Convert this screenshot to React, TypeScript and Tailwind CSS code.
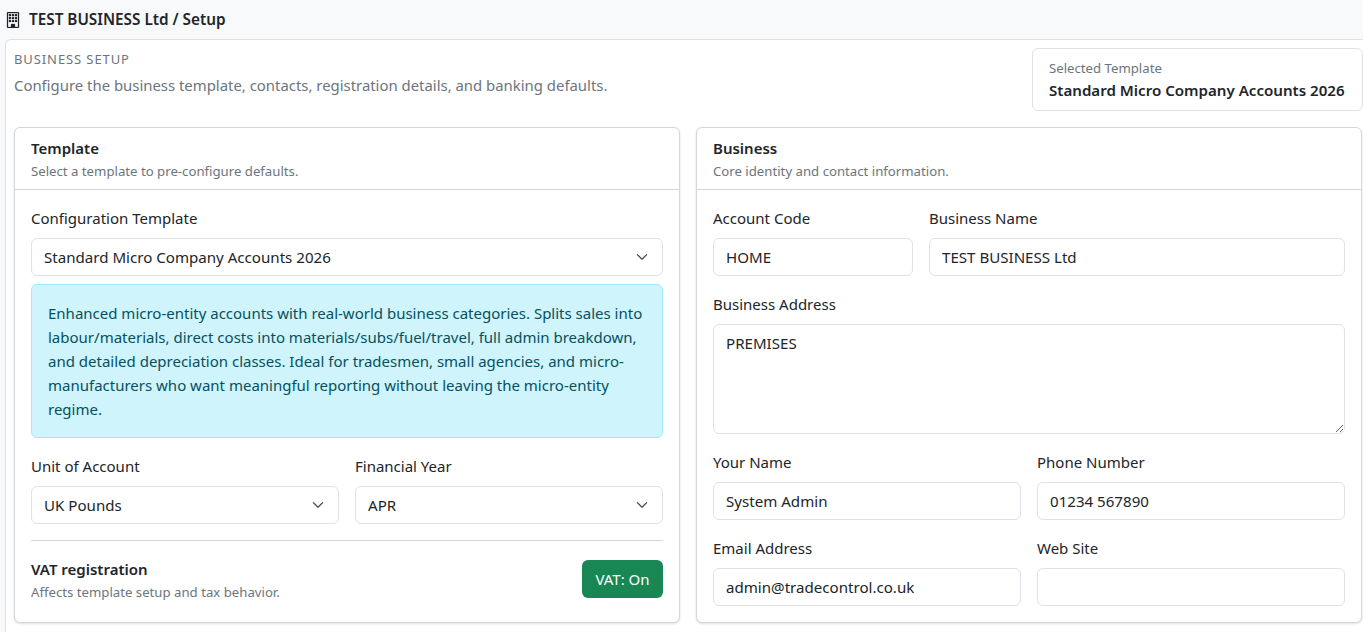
import { BsBuilding, BsChevronDown } from 'react-icons/bs'

const labelCls = 'block text-[15px] leading-[24px] text-[#212529] mb-2'
const inputCls =
  'block w-full h-[38px] px-3 text-[15.1px] text-[#212529] bg-white border border-[#dee2e6] rounded-md outline-none'

const Field = ({ label, value, className = '' }: { label: string; value: string; className?: string }) => (
  <div className={className}>
    <label className={labelCls}>{label}</label>
    <input className={inputCls} defaultValue={value} />
  </div>
)

const SelectField = ({ label, value, options }: { label?: string; value: string; options: string[] }) => (
  <div>
    {label && <label className={labelCls}>{label}</label>}
    <div className="relative">
      <select className={`${inputCls} appearance-none`} defaultValue={value}>
        {options.map((o) => (
          <option key={o}>{o}</option>
        ))}
      </select>
      <BsChevronDown className="absolute right-[15px] top-[13px] text-[12px] text-[#343a40] pointer-events-none" strokeWidth={0.8} />
    </div>
  </div>
)

const CardHeader = ({ title, subtitle }: { title: string; subtitle: string }) => (
  <div className="h-[62px] px-4 pt-[9px] border-b border-[#d5d6d8]">
    <div className="text-[15px] leading-[22px] font-semibold text-[#212529]">{title}</div>
    <div className="text-[13.2px] leading-[20px] text-[#6c757d] mt-[2px]">{subtitle}</div>
  </div>
)

export default function App() {
  return (
    <div className="h-[632px] overflow-hidden bg-[#f8f9fa] font-['Noto_Sans',sans-serif]">
      <div className="h-[39px] flex items-center gap-2 pl-[5px]">
        <BsBuilding className="text-[16px] text-[#212529]" strokeWidth={0.3} />
        <span className="text-[15.3px] font-semibold text-[#212529]">TEST BUSINESS Ltd / Setup</span>
      </div>

      <div className="ml-[5px] h-[593px] bg-white border-l border-t border-[#dee2e6] rounded-tl-md pl-2 pt-[8px]">
        <div className="flex justify-between h-[79px]">
          <div className="pt-[1px]">
            <div className="text-[13px] leading-[20px] tracking-[0.9px] text-[#6c757d]">BUSINESS SETUP</div>
            <div className="text-[14.9px] leading-[24px] text-[#6c757d] mt-[4px]">
              Configure the business template, contacts, registration details, and banking defaults.
            </div>
          </div>
          <div className="w-[331px] h-[63px] bg-white border border-[#dee2e6] rounded-md px-4 pt-[9px]">
            <div className="text-[13.2px] leading-[20px] text-[#6c757d]">Selected Template</div>
            <div className="text-[15.1px] leading-[22px] font-semibold text-[#212529] mt-[1px]">Standard Micro Company Accounts 2026</div>
          </div>
        </div>

        <div className="grid grid-cols-[666px_666px] gap-4">
          <div className="h-[496px] bg-white border border-[#d5d6d8] rounded-md shadow-sm">
            <CardHeader title="Template" subtitle="Select a template to pre-configure defaults." />
            <div className="px-4 pt-4">
              <SelectField
                label="Configuration Template"
                value="Standard Micro Company Accounts 2026"
                options={['Standard Micro Company Accounts 2026']}
              />
              <div className="mt-2 h-[154px] px-4 pt-[16px] bg-[#cff4fc] border border-[#9eeaf9] rounded-md text-[15px] leading-[24px] text-[#055160]">
                Enhanced micro-entity accounts with real-world business categories. Splits sales into labour/materials, direct costs into materials/subs/fuel/travel, full admin breakdown, and detailed depreciation classes. Ideal for tradesmen, small agencies, and micro-manufacturers who want meaningful reporting without leaving the micro-entity regime.
              </div>
              <div className="grid grid-cols-2 gap-4 mt-4">
                <SelectField label="Unit of Account" value="UK Pounds" options={['UK Pounds']} />
                <SelectField label="Financial Year" value="APR" options={['APR']} />
              </div>
              <div className="border-t border-[#d5d6d8] mt-4 pt-[18px] flex justify-between items-start">
                <div>
                  <div className="text-[15px] leading-[20px] font-semibold text-[#212529]">VAT registration</div>
                  <div className="text-[13.2px] leading-[20px] text-[#6c757d] mt-[3px]">Affects template setup and tax behavior.</div>
                </div>
                <button className="w-[81px] h-[38px] mt-[1px] bg-[#198754] text-white text-[15px] rounded-md">VAT: On</button>
              </div>
            </div>
          </div>

          <div className="h-[496px] bg-white border border-[#d5d6d8] rounded-md shadow-sm">
            <CardHeader title="Business" subtitle="Core identity and contact information." />
            <div className="px-4 pt-4">
              <div className="grid grid-cols-[200px_416px] gap-4">
                <Field label="Account Code" value="HOME" />
                <Field label="Business Name" value="TEST BUSINESS Ltd" />
              </div>
              <div className="mt-4">
                <label className={labelCls}>Business Address</label>
                <textarea
                  className="block w-full h-[110px] px-3 py-[6px] text-[15.1px] leading-[24px] text-[#212529] bg-white border border-[#dee2e6] rounded-md outline-none"
                  defaultValue="PREMISES"
                />
              </div>
              <div className="grid grid-cols-2 gap-4 mt-4">
                <Field label="Your Name" value="System Admin" />
                <Field label="Phone Number" value="01234 567890" />
              </div>
              <div className="grid grid-cols-2 gap-4 mt-4">
                <Field label="Email Address" value="admin@tradecontrol.co.uk" />
                <Field label="Web Site" value="" />
              </div>
            </div>
          </div>
        </div>
      </div>
    </div>
  )
}
